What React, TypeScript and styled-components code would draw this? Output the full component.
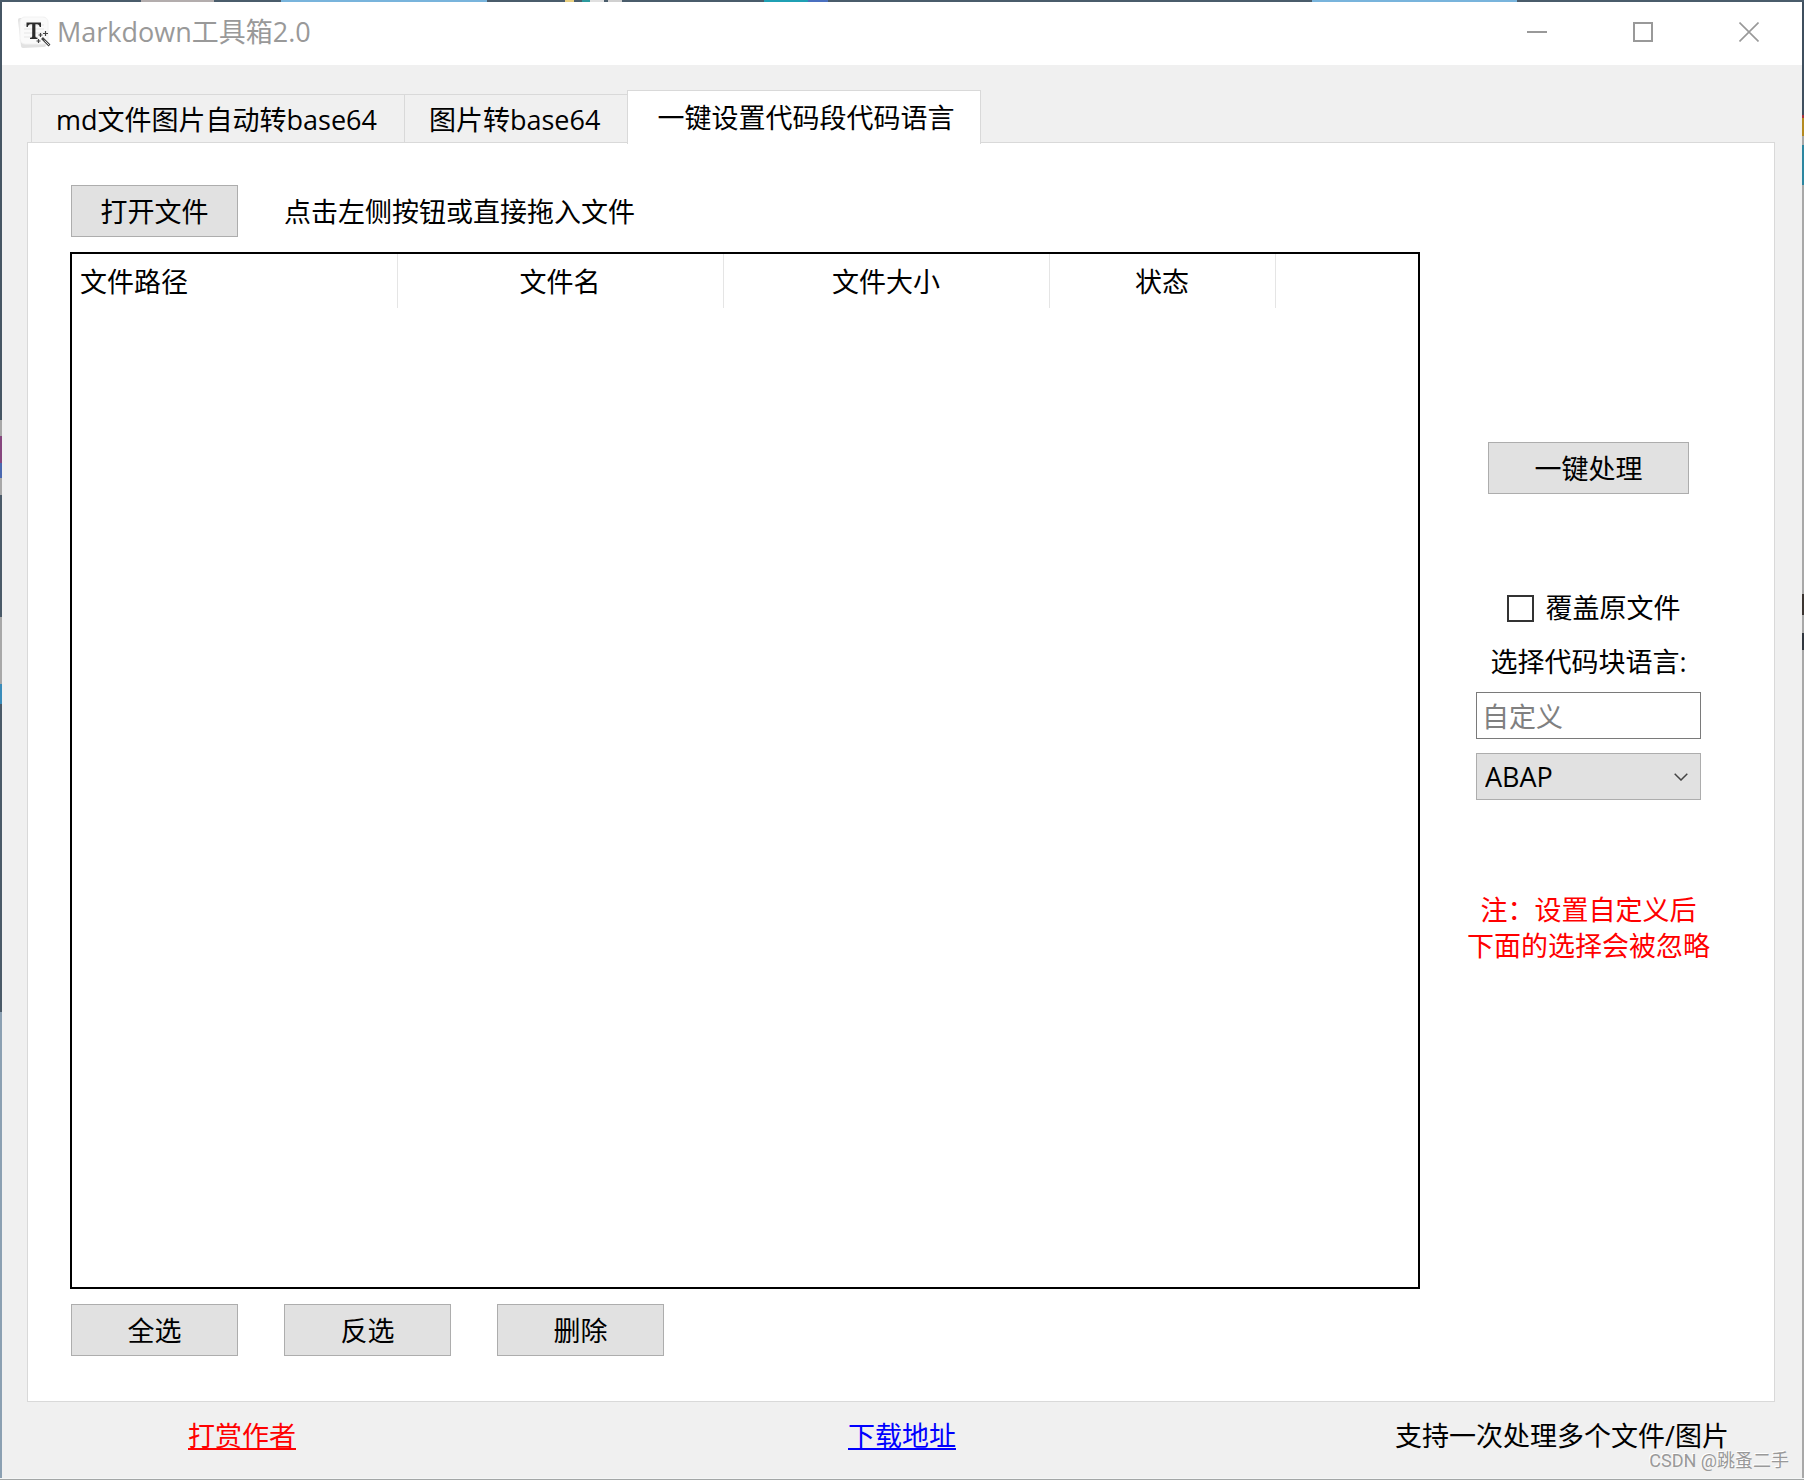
import React, { useState } from "react";
import styled, { createGlobalStyle, css } from "styled-components";

const GlobalStyle = createGlobalStyle`
  *, *::before, *::after { box-sizing: border-box; }
  body { margin: 0; }
  body, button, input, select, table {
    font-family: "Open Sans", "Noto Sans CJK SC", sans-serif;
    font-size: 27px;
    font-weight: 400;
    line-height: 36px;
    color: #000;
  }
`;

const EDGE = "2px";

const Desktop = styled.div`
  min-height: 100vh;
  display: grid;
  grid-template: ${EDGE} 1fr ${EDGE} / ${EDGE} 1fr ${EDGE};
`;

const TopEdge = styled.div`
  grid-column: 1 / -1;
  background: linear-gradient(90deg,
    #4a5c6b 0 141px, #b3adad 141px 214px, #4a5c6b 214px 281px,
    #78b4dc 281px 487px, #4a5c6b 487px 565px, #e8cf80 565px 574px, #4a5c6b 574px 582px,
    #2c9a9e 582px 590px, #e0e0e0 590px 604px, #4a5c6b 604px 608px, #d0d0d0 608px 622px,
    #4a5c6b 622px 764px, #1fa0b4 764px 808px, #4a70c0 808px 828px,
    #4a5c6b 828px 1312px, #78b4dc 1312px 1517px, #4a5c6b 1517px);
`;

const LeftEdge = styled.div`
  background: linear-gradient(180deg,
    #465664 0 418px, #a8a8a8 418px 434px, #86467e 434px 461px, #4a68b0 461px 476px,
    #a8a8a8 476px 493px, #4a5a68 493px 615px, #a8a8a8 615px 682px, #3a8cba 682px 702px,
    #4a5a68 702px 1010px, #8ba0b2 1010px);
`;

const RightEdge = styled.div`
  background: linear-gradient(180deg,
    #3f4f5e 0 113px, #a82f3c 113px 116px, #b48a20 116px 134px, #a8a8a8 134px 143px,
    #2c86a0 143px 183px, #a8a8a8 183px 592px, #3a3430 592px 613px, #a8a8a8 613px 631px,
    #30363e 631px 648px, #a8a8a8 648px);
`;

const BottomEdge = styled.div`
  grid-column: 1 / -1;
  border-bottom: 1px solid #a3a6a6;
  background: #f4f6f6;
`;

const Window = styled.main`
  position: relative;
  display: flex;
  flex-direction: column;
  min-width: 0;
  background: #f0f0f0;
`;

const TitleBar = styled.header`
  display: flex;
  align-items: center;
  height: 63px;
  padding: 0 0 3px 15px;
  background: #fff;
  color: #999;
`;

const Title = styled.h1`
  flex: 1;
  margin: 0 0 0 6px;
  font-size: 27px;
  font-weight: 400;
`;

const CaptionButton = styled.button`
  display: grid;
  place-items: center;
  width: 106px;
  height: 60px;
  padding: 0;
  border: 0;
  background: transparent;
`;

const Tabs = styled.div`
  display: flex;
  align-items: flex-end;
  height: 78px;
  padding: 0 29px;
`;

const Tab = styled.button<{ $active: boolean }>`
  height: 49px;
  padding: 1px 27px 0 24px;
  border: 1px solid #d9d9d9;
  border-width: 1px 0 0 1px;
  background: #f0f0f0;
  ${(p) =>
    p.$active &&
    css`
      z-index: 1;
      height: 54px;
      margin-bottom: -1px;
      padding: 1px 26px 0 29px;
      border-width: 1px 1px 0;
      background: #fff;
    `}
`;

const Panel = styled.section`
  flex: 1;
  display: grid;
  grid-template-columns: minmax(0, 1fr) 285px;
  column-gap: 26px;
  margin: -1px 27px 0 25px;
  padding: 42px 43px 45px 42px;
  border: 1px solid #d9d9d9;
  background: #fff;
`;

const Files = styled.div`
  display: flex;
  flex-direction: column;
  gap: 15px;
`;

const Row = styled.div`
  display: flex;
  align-items: center;
  gap: 46px;
  padding-left: 1px;
`;

const Hint = styled.span`
  padding-top: 2px;
`;

const PushButton = styled.button<{ $wide?: boolean }>`
  width: ${(p) => (p.$wide ? 201 : 167)}px;
  height: 52px;
  padding: 2px 0 0;
  border: 1px solid #adadad;
  background: #e1e1e1;
`;

const TableFrame = styled.div`
  flex: 1;
  border: 2px solid #000;
`;

const FileTable = styled.table`
  width: 100%;
  border-collapse: collapse;
  table-layout: fixed;
`;

const HeadCell = styled.th<{ $width?: number; $left?: boolean }>`
  width: ${(p) => (p.$width ? `${p.$width}px` : "auto")};
  height: 54px;
  padding: 2px 8px 0;
  border-right: ${(p) => (p.$width ? "1px solid #e5e5e5" : "0")};
  font-weight: 400;
  text-align: ${(p) => (p.$left ? "left" : "center")};
`;

const Options = styled.form`
  display: flex;
  flex-direction: column;
  align-items: center;
  padding-top: 257px;
`;

const CheckLabel = styled.label`
  display: flex;
  align-items: center;
  gap: 12px;
  margin: 96px 0 18px;
  padding-left: 10px;
`;

const CheckBox = styled.input`
  appearance: none;
  width: 27px;
  height: 27px;
  margin: 0;
  border: 2px solid #333;
  background: #fff;
  &:checked { background: #333; box-shadow: inset 0 0 0 4px #fff; }
`;

const fieldBox = css`
  width: 225px;
  height: 47px;
  border-radius: 0;
`;

const TextField = styled.input`
  ${fieldBox}
  margin: 12px 0 14px;
  padding: 2px 5px 0;
  border: 1px solid #7a7a7a;
  background: #fff;
  &::placeholder { color: #808080; opacity: 1; }
`;

const SelectWrap = styled.div`
  display: grid;
  align-items: center;
  > * { grid-area: 1 / 1; }
  > svg { justify-self: end; margin-right: 13px; pointer-events: none; }
`;

const Select = styled.select`
  ${fieldBox}
  appearance: none;
  padding: 0 8px;
  border: 1px solid #adadad;
  background: #e1e1e1;
`;

const Note = styled.p`
  margin: 92px 0 0;
  color: #f00;
  text-align: center;
`;

const Footer = styled.footer`
  display: grid;
  grid-template-columns: 430px 1fr 430px;
  align-items: center;
  justify-items: center;
  height: 76px;
  padding: 0 25px 8px;
`;

const FooterLink = styled.a<{ $color: string }>`
  color: ${(p) => p.$color};
  text-decoration-thickness: 2px;
  text-underline-offset: 2px;
`;

const Watermark = styled.span`
  position: absolute;
  right: 13px;
  bottom: 5px;
  font: 18px/24px Roboto, "Noto Sans CJK SC", sans-serif;
  color: #999;
  text-shadow: -1px -1px 0 #fff;
`;

const AppIcon = () => (
  <svg width="34" height="34" viewBox="0 0 34 34" aria-hidden="true">
    <path d="M3 5 6 31 L27 30 V4Z" fill="#e2e2e2" stroke="#e2e2e2" strokeWidth="4" strokeLinejoin="round" />
    <rect x="3" y="2" width="28" height="27" rx="5" fill="#fafafa" stroke="#f2f2f2" />
    <path d="M7 10h20M7 14h20M7 18h20M7 22h14" stroke="#e6e6e6" />
    <path d="M9.500 7.500H24V12H22.700Q22.300 9.200 20 9.200H18.400V21.500Q18.400 22.700 20.500 22.800V24H13V22.800Q15.200 22.700 15.200 21.500V9.200H13.500Q11.200 9.200 10.800 12H9.500Z" fill="#2b2b2b" />
    <path d="M25 23 32.500 30.500" stroke="#fff" strokeWidth="4" />
    <path d="M25 23 32.500 30.500" stroke="#444" strokeWidth="2.600" />
    <path d="M27.500 25.500 32 30" stroke="#ddd" />
    <path d="M23.500 18v4M21.500 20h4M28.500 16v5M26 18.500h5M21.500 24v4M19.500 26h4" stroke="#444" strokeWidth="1.200" />
  </svg>
);

const TABS = ["md文件图片自动转base64", "图片转base64", "一键设置代码段代码语言"];
const COLUMNS = [
  { name: "文件路径", width: 325, left: true },
  { name: "文件名", width: 326 },
  { name: "文件大小", width: 326 },
  { name: "状态", width: 226 },
];
const LANGUAGES = ["ABAP", "C", "C++", "Java", "JavaScript", "Python"];

export default function App() {
  const [tab, setTab] = useState(2);
  return (
    <Desktop>
      <GlobalStyle />
      <TopEdge />
      <LeftEdge />
      <Window>
        <TitleBar>
          <AppIcon />
          <Title>Markdown工具箱2.0</Title>
          <CaptionButton aria-label="最小化">
            <svg width="20" height="20" stroke="#999" strokeWidth="2"><path d="M0 10H20" /></svg>
          </CaptionButton>
          <CaptionButton aria-label="最大化">
            <svg width="20" height="20" stroke="#999" strokeWidth="2" fill="none"><path d="M1 1H19V19H1Z" /></svg>
          </CaptionButton>
          <CaptionButton aria-label="关闭">
            <svg width="20" height="20" stroke="#999" strokeWidth="1.600"><path d="M.5.5 19.500 19.500M19.500.5.5 19.500" /></svg>
          </CaptionButton>
        </TitleBar>
        <Tabs role="tablist">
          {TABS.map((name, i) => (
            <Tab key={name} role="tab" aria-selected={tab === i} $active={tab === i} onClick={() => setTab(i)}>
              {name}
            </Tab>
          ))}
        </Tabs>
        <Panel>
          <Files>
            <Row>
              <PushButton>打开文件</PushButton>
              <Hint>点击左侧按钮或直接拖入文件</Hint>
            </Row>
            <TableFrame>
              <FileTable>
                <thead>
                  <tr>
                    {COLUMNS.map((c) => (
                      <HeadCell key={c.name} $width={c.width} $left={c.left}>{c.name}</HeadCell>
                    ))}
                    <HeadCell />
                  </tr>
                </thead>
              </FileTable>
            </TableFrame>
            <Row>
              <PushButton>全选</PushButton>
              <PushButton>反选</PushButton>
              <PushButton>删除</PushButton>
            </Row>
          </Files>
          <Options onSubmit={(e) => e.preventDefault()}>
            <PushButton $wide>一键处理</PushButton>
            <CheckLabel>
              <CheckBox type="checkbox" />
              覆盖原文件
            </CheckLabel>
            <label htmlFor="language">选择代码块语言:</label>
            <TextField aria-label="自定义语言" placeholder="自定义" />
            <SelectWrap>
              <Select id="language">
                {LANGUAGES.map((l) => <option key={l}>{l}</option>)}
              </Select>
              <svg width="14" height="8" fill="none" stroke="#444" strokeWidth="1.500"><path d="M.7.7 7 7 13.300.7" /></svg>
            </SelectWrap>
            <Note>注：设置自定义后<br />下面的选择会被忽略</Note>
          </Options>
        </Panel>
        <Footer>
          <FooterLink href="#reward" $color="#f00">打赏作者</FooterLink>
          <FooterLink href="#download" $color="#00f">下载地址</FooterLink>
          <span>支持一次处理多个文件/图片</span>
        </Footer>
        <Watermark>CSDN @跳蚤二手</Watermark>
      </Window>
      <RightEdge />
      <BottomEdge />
    </Desktop>
  );
}
